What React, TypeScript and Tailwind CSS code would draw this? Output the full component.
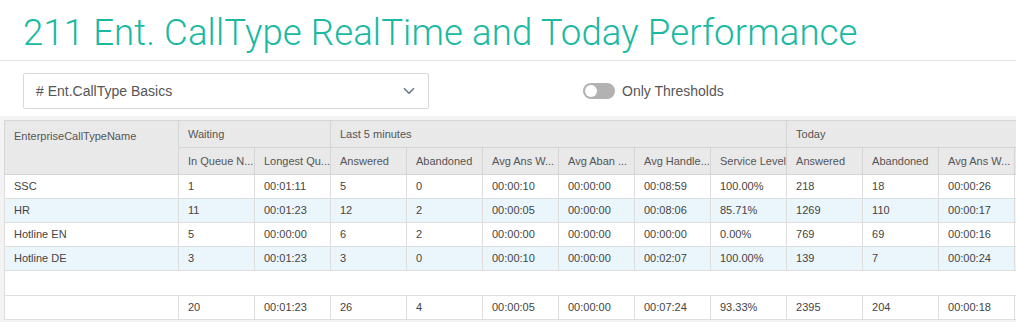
import { ChevronDown } from "lucide-react";

type Row = {
    name: string;
    cells: string[];
};

const rows: Row[] = [
    { name: "SSC", cells: ["1", "00:01:11", "5", "0", "00:00:10", "00:00:00", "00:08:59", "100.00%", "218", "18", "00:00:26", "00:00:00"] },
    { name: "HR", cells: ["11", "00:01:23", "12", "2", "00:00:05", "00:00:00", "00:08:06", "85.71%", "1269", "110", "00:00:17", "00:00:00"] },
    { name: "Hotline EN", cells: ["5", "00:00:00", "6", "2", "00:00:00", "00:00:00", "00:00:00", "0.00%", "769", "69", "00:00:16", "00:00:00"] },
    { name: "Hotline DE", cells: ["3", "00:01:23", "3", "0", "00:00:10", "00:00:00", "00:02:07", "100.00%", "139", "7", "00:00:24", "00:00:00"] },
];

const totals = ["20", "00:01:23", "26", "4", "00:00:05", "00:00:00", "00:07:24", "93.33%", "2395", "204", "00:00:18", "00:00:00"];

// labels are clipped by the grid itself, shown as the grid shows them
const subHeaders = [
    "In Queue N...",
    "Longest Qu...",
    "Answered",
    "Abandoned",
    "Avg Ans W...",
    "Avg Aban ...",
    "Avg Handle...",
    "Service Level",
    "Answered",
    "Abandoned",
    "Avg Ans W...",
    "Avg Aban ...",
];

const th = "border border-[#d5d5d5] pl-[9px] pr-0 text-left font-normal whitespace-nowrap overflow-hidden align-middle";
const td = "border-x border-b border-[#dedede] pl-[9px] pr-0 whitespace-nowrap overflow-hidden";

const App = () => {
    return (
        <div className="w-[1016px] h-[322px] overflow-hidden bg-white font-['Liberation_Sans',Arial,sans-serif]">
            <div className="h-[61px] border-b border-[#e6e6e6] pl-[23px] pt-[12px]">
                <h1 className="text-[36.6px] leading-[42px] font-light text-[#1ab9a2] font-['Roboto',sans-serif] tracking-[0.1px]">
                    211 Ent. CallType RealTime and Today Performance
                </h1>
            </div>

            <div className="h-[55px] flex items-start pt-[12px]">
                <button className="ml-[23px] w-[406px] h-[36px] border border-[#d8d8d8] rounded-[2px] flex items-center justify-between pl-[12px] pr-[10px] text-[14px] text-[#555]">
                    <span># Ent.CallType Basics</span>
                    <ChevronDown size={18} strokeWidth={2.2} className="text-[#6a7a8c]" />
                </button>
                <div className="ml-[154px] h-[36px] flex items-center gap-[7px]">
                    <div className="w-[32px] h-[16px] rounded-full bg-[#b2b2b2] flex items-center px-[2px]">
                        <div className="w-[12px] h-[12px] rounded-full bg-white" />
                    </div>
                    <span className="text-[14px] text-[#555]">Only Thresholds</span>
                </div>
            </div>

            <div className="bg-[#f3f3f3] h-[206px] pl-[4px] pt-[4px] overflow-hidden">
                <table className="table-fixed border-collapse w-[1086px] text-[11px] bg-white">
                    <colgroup>
                        <col className="w-[174px]" />
                        {subHeaders.map((_, i) => (
                            <col key={i} className="w-[76px]" />
                        ))}
                    </colgroup>
                    <thead className="bg-[#e9e9e9] text-[#555]">
                        <tr className="h-[27px]">
                            <th rowSpan={2} className={th + " align-top pt-[7px]"}>
                                EnterpriseCallTypeName
                            </th>
                            <th colSpan={2} className={th}>Waiting</th>
                            <th colSpan={6} className={th}>Last 5 minutes</th>
                            <th colSpan={4} className={th}>Today</th>
                        </tr>
                        <tr className="h-[27px]">
                            {subHeaders.map((h, i) => (
                                <th key={i} className={th}>{h}</th>
                            ))}
                        </tr>
                    </thead>
                    <tbody className="text-[#444]">
                        {rows.map((r, i) => (
                            <tr key={r.name} className={i % 2 === 1 ? "h-[24px] bg-[#ebf6fc]" : "h-[24px]"}>
                                <td className={td}>{r.name}</td>
                                {r.cells.map((c, j) => (
                                    <td key={j} className={td}>{c}</td>
                                ))}
                            </tr>
                        ))}
                        <tr className="h-[25px]">
                            <td colSpan={13} className="border-l border-[#dedede]" />
                        </tr>
                        <tr className="h-[24px]">
                            <td className="border border-[#dedede]" />
                            {totals.map((c, j) => (
                                <td key={j} className={"border-t " + td}>{c}</td>
                            ))}
                        </tr>
                    </tbody>
                </table>
            </div>
        </div>
    );
};

export default App;
